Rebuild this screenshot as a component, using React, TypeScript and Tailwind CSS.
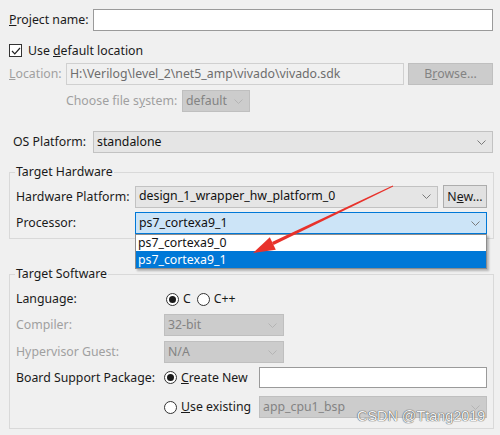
import type { ReactNode } from 'react';

function Chevron({ disabled }: { disabled?: boolean }) {
  return (
    <svg width="9" height="5" viewBox="0 0 9 5" className="shrink-0">
      <polyline
        points="0.5,0.5 4.5,4.5 8.5,0.5"
        fill="none"
        stroke={disabled ? '#b4b4b4' : '#7a7a7a'}
        strokeWidth="1"
      />
    </svg>
  );
}

function Combo({
  value,
  w,
  disabled,
  focused,
}: {
  value: string;
  w: string;
  disabled?: boolean;
  focused?: boolean;
}) {
  const look = focused
    ? 'bg-[#cce4f7] border-[#0078d7] text-[#111]'
    : disabled
      ? 'bg-[#cccccc] border-[#bfbfbf] text-[#838383]'
      : 'bg-[#e5e5e5] border-[#c2c2c2] text-[#111]';
  return (
    <div className={`${w} shrink-0 h-[22px] border flex items-center justify-between pl-[3px] pr-[6px] ${look}`}>
      <span className="leading-none whitespace-nowrap">{value}</span>
      <Chevron disabled={disabled} />
    </div>
  );
}

function Radio({ on, children }: { on?: boolean; children: ReactNode }) {
  return (
    <label className="flex items-center gap-[4px] whitespace-nowrap">
      <span className="w-[13px] h-[13px] shrink-0 rounded-full border border-[#333] bg-white flex items-center justify-center">
        {on && <span className="w-[7px] h-[7px] rounded-full bg-[#1a1a1a]" />}
      </span>
      <span>{children}</span>
    </label>
  );
}

function Label({ w, dim, children }: { w: string; dim?: boolean; children?: ReactNode }) {
  return <span className={`${w} shrink-0 whitespace-nowrap ${dim ? 'text-[#a0a0a0]' : ''}`}>{children}</span>;
}

function Group({ title, children }: { title: string; children: ReactNode }) {
  return (
    <fieldset className="border border-[#d9d9d9] mx-[9px] w-[484px] px-[6px]">
      <legend className="px-[1px] ml-[-1px] leading-[16px]">{title}</legend>
      {children}
    </fieldset>
  );
}

export default function App() {
  return (
    <div className="relative w-[500px] h-[435px] overflow-hidden bg-[#f0f0f0] text-[12.3px] leading-[18px] text-[#1a1a1a] font-['Noto_Sans',sans-serif]">
      {/* project name */}
      <div className="flex items-center pt-[9px] pl-[9px]">
        <Label w="w-[84px]">
          <u>P</u>roject name:
        </Label>
        <div className="w-[400px] shrink-0 h-[22px] border border-[#9a9a9a] bg-white" />
      </div>

      {/* default location */}
      <div className="flex items-center gap-[6px] mt-[13px] pl-[9px] h-[13px]">
        <span className="w-[13px] h-[13px] border border-[#333] bg-white flex items-center justify-center">
          <svg width="10" height="8" viewBox="0 0 10 8">
            <polyline points="1,4 3.8,6.8 9,1" fill="none" stroke="#222" strokeWidth="1.2" />
          </svg>
        </span>
        <span className="whitespace-nowrap">
          Use <u>d</u>efault location
        </span>
      </div>

      <div className="flex items-center mt-[6px] pl-[9px]">
        <Label w="w-[57px]" dim>
          <u>L</u>ocation:
        </Label>
        <div className="w-[338px] shrink-0 h-[22px] border border-[#d0d0d0] bg-[#f0f0f0] text-[#6d6d6d] flex items-center px-[3px] whitespace-nowrap">
          H:\Verilog\level_2\net5_amp\vivado\vivado.sdk
        </div>
        <div className="ml-[4px] w-[85px] shrink-0 h-[22px] border border-[#bfbfbf] bg-[#cccccc] text-[#838383] flex items-center justify-center">
          B<u>r</u>owse...
        </div>
      </div>

      <div className="flex items-center mt-[5px] pl-[66px]">
        <Label w="w-[116px]" dim>
          Choose file s<u>y</u>stem:
        </Label>
        <Combo value="default" w="w-[68px]" disabled />
      </div>

      <div className="flex items-center mt-[19px] pl-[13px]">
        <Label w="w-[80px]">OS Platform:</Label>
        <Combo value="standalone" w="w-[400px]" />
      </div>

      {/* target hardware */}
      <div className="mt-[11px]">
        <Group title="Target Hardware">
          <div className="flex items-center mt-[5px]">
            <Label w="w-[119px]">Hardware Platform:</Label>
            <Combo value="design_1_wrapper_hw_platform_0" w="w-[303px]" />
            <div className="ml-[5px] w-[44px] shrink-0 h-[23px] border border-[#adadad] bg-[#e1e1e1] flex items-center justify-center whitespace-nowrap">
              N<u>e</u>w...
            </div>
          </div>
          <div className="flex items-center mt-[4px] mb-[4px]">
            <Label w="w-[119px]">Processor:</Label>
            <div className="relative">
              <Combo value="ps7_cortexa9_1" w="w-[352px]" focused />
              <div className="absolute left-0 top-full z-10 w-[352px] border border-[#8c8c8c] bg-white shadow-[2px_2px_2px_rgba(0,0,0,0.25)]">
                <div className="h-[16px] leading-[16px] pl-[2px] text-[#111]">ps7_cortexa9_0</div>
                <div className="h-[17px] leading-[17px] pl-[2px] bg-[#0078d7] text-white">ps7_cortexa9_1</div>
              </div>
            </div>
          </div>
        </Group>
      </div>

      {/* target software */}
      <div className="mt-[27px]">
        <Group title="Target Software">
          <div className="flex items-center mt-[9px] h-[16px]">
            <Label w="w-[150px]">Language:</Label>
            <div className="flex items-center gap-[6px]">
              <Radio on>C</Radio>
              <Radio>C++</Radio>
            </div>
          </div>
          <div className="flex items-center mt-[7px]">
            <Label w="w-[148px]" dim>
              Compiler:
            </Label>
            <Combo value="32-bit" w="w-[120px]" disabled />
          </div>
          <div className="flex items-center mt-[5px]">
            <Label w="w-[148px]" dim>
              Hypervisor Guest:
            </Label>
            <Combo value="N/A" w="w-[120px]" disabled />
          </div>
          <div className="flex items-center mt-[4px]">
            <Label w="w-[148px]">Board Support Package:</Label>
            <div className="w-[95px] shrink-0">
              <Radio on>
                <u>C</u>reate New
              </Radio>
            </div>
            <div className="w-[228px] shrink-0 h-[21px] border border-[#9a9a9a] bg-white" />
          </div>
          <div className="flex items-center mt-[8px] mb-[10px]">
            <Label w="w-[148px]" />
            <div className="w-[95px] shrink-0">
              <Radio>
                <u>U</u>se existing
              </Radio>
            </div>
            <Combo value="app_cpu1_bsp" w="w-[228px]" disabled />
          </div>
        </Group>
      </div>

      {/* red annotation arrow */}
      <svg className="absolute left-0 top-0 pointer-events-none z-20" width="500" height="435">
        <polygon points="393.2,186.4 392.8,185.6 272,241.9 273.6,245.1" fill="#e8322b" />
        <polygon points="253,253 275.8,249.8 269.8,237.2" fill="#e8322b" />
      </svg>

      <div className="absolute left-[357px] top-[406px] z-20 whitespace-nowrap text-[14.4px] leading-[20px] text-[#f4f4f4] font-['Liberation_Sans',sans-serif] [text-shadow:0_0_1px_#444,0_0_1px_#444]">
        CSDN @Ttang2019
      </div>
    </div>
  );
}
